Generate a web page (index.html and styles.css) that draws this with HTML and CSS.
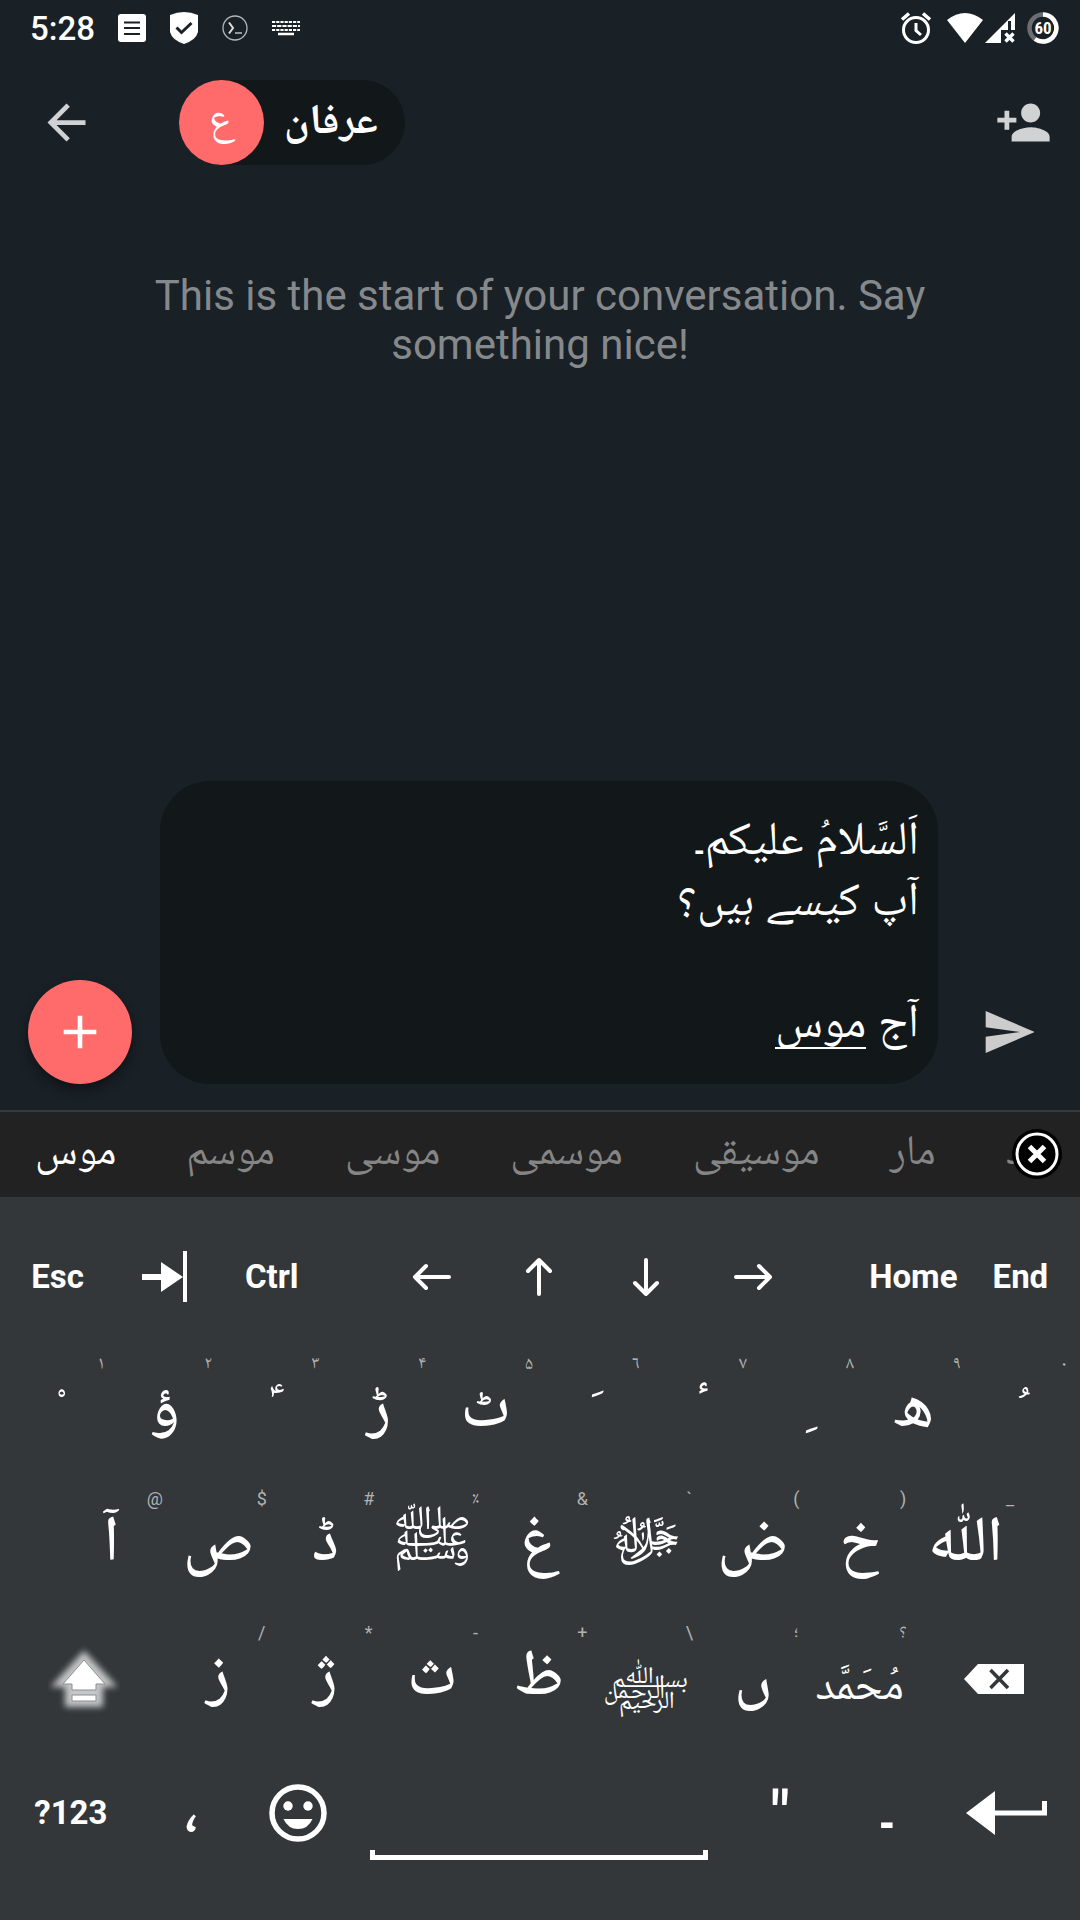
FILE: index.html
```html
<!DOCTYPE html>
<html lang="en">
<head>
<meta charset="utf-8">
<meta name="viewport" content="width=device-width, initial-scale=1">
<title>عرفان</title>
<link rel="stylesheet" href="styles.css">
</head>
<body>
<div class="screen">
  <div class="status">
    <span class="clock">5:28</span>
    <svg class="st-doc" width="28" height="28" viewBox="0 0 28 28"><rect width="28" height="28" rx="3" fill="#fff"/><path d="M6 8.500h16M6 14h16M6 20h16" stroke="#1a2026" stroke-width="2"/></svg>
    <svg class="st-shield" width="28" height="32" viewBox="0 0 28 32"><path d="M0 3Q14-3 28 3V20Q26 28 14 32Q2 28 0 20Z" fill="#fff"/><path d="M6.500 15.500l5 5L21.500 11" fill="none" stroke="#1a2026" stroke-width="3"/></svg>
    <svg class="st-term" width="26" height="26" viewBox="0 0 26 26" fill="none" stroke="#b4b7ba"><circle cx="13" cy="13" r="12" stroke-width="1.300"/><path d="M7 7.500l4 5.500-4 5.500" stroke="#ddd" stroke-width="2"/><path d="M13 18h7" stroke-width="1.600"/></svg>
    <svg class="st-kbd" width="28" height="16" viewBox="0 0 28 16" fill="none" stroke="#fff"><path d="M0 2h28M0 10h28" stroke-width="2.200" stroke-dasharray="3.200 1"/><path d="M0 6h28" stroke-width="2.200" stroke-dasharray="4.200 1"/><path d="M6 14h16" stroke-width="2.500"/></svg>
    <span class="grow"></span>
    <svg class="st-alarm" width="32" height="32" viewBox="0 0 32 32" fill="none" stroke="#fff"><circle cx="16" cy="18" r="12.500" stroke-width="3"/><path d="M16 11v7.500l5 4.500" stroke-width="3"/><path d="M2 7.500l7-6M30 7.500l-7-6" stroke-width="3.600"/></svg>
    <svg class="st-wifi" width="36" height="30" viewBox="0 0 36 30"><path d="M0 7Q18-7 36 7L18 30Z" fill="#fff"/></svg>
    <svg class="st-cell" width="30" height="30" viewBox="0 0 30 30"><path d="M30 0V17h-4V8h-3v9h-7v13H0Z" fill="#fff"/><path d="M20.500 20.500l8 8m0-8l-8 8" stroke="#fff" stroke-width="3.400"/></svg>
    <svg class="st-batt" width="32" height="32" viewBox="0 0 32 32"><circle cx="16" cy="16" r="13.500" fill="none" stroke="#6a6e71" stroke-width="4.500"/><path d="M16 2.500A13.500 13.500 0 1 1 8 27" fill="none" stroke="#fff" stroke-width="4.500"/><text x="16" y="22" text-anchor="middle" class="batt-text">60</text></svg>
  </div>

  <header class="bar">
    <button class="icon-btn back" aria-label="Back"><svg width="57" height="57" viewBox="0 0 24 24" fill="#d0d2d3"><path d="M20 11H7.830l5.590-5.590L12 4l-8 8 8 8 1.410-1.410L7.830 13H20v-2z"/></svg></button>
    <button class="chip"><span class="avatar ar">ع</span><span class="name ar">عرفان</span></button>
    <span class="grow"></span>
    <button class="icon-btn" aria-label="Add person"><svg width="57" height="57" viewBox="0 0 24 24" fill="#d0d2d3"><path d="M15 12c2.210 0 4-1.790 4-4s-1.790-4-4-4-4 1.790-4 4 1.790 4 4 4zm-9-2V7H4v3H1v2h3v3h2v-3h3v-2H6zm9 4c-2.670 0-8 1.340-8 4v2h16v-2c0-2.660-5.330-4-8-4z"/></svg></button>
  </header>

  <main class="thread"><p class="intro">This is the start of your conversation. Say something nice!</p></main>

  <form class="composer">
    <button type="button" class="fab" aria-label="Attach"><svg width="56" height="56" viewBox="0 0 24 24" fill="#fff"><path d="M19 13h-6v6h-2v-6H5v-2h6V5h2v6h6v2z"/></svg></button>
    <div class="field">
      <textarea class="message ar" lang="ur" dir="rtl" rows="4" aria-label="Message">اَلسَّلامُ علیکم۔
آپ کیسے ہیں؟

آج موس</textarea>
      <span class="composing"></span>
    </div>
    <button type="button" class="icon-btn" aria-label="Send"><svg width="56" height="56" viewBox="0 0 24 24" fill="#ccc"><path d="M2.010 21L23 12 2.010 3 2 10l15 2-15 2z"/></svg></button>
  </form>

  <section class="keyboard">
    <div class="suggest ar" lang="ur">
      <button class="word first">موس</button><button class="word">موسم</button><button class="word">موسی</button><button class="word">موسمی</button><button class="word">موسیقی</button><button class="word">مار</button><button class="word">مود</button>
      <button class="close" aria-label="Close suggestions"><svg width="50" height="50" viewBox="0 0 50 50"><circle cx="25" cy="25" r="25" fill="#000"/><circle cx="25" cy="25" r="20" fill="none" stroke="#fff" stroke-width="3"/><path d="M17.500 17.500l15 15m0-15l-15 15" stroke="#fff" stroke-width="5"/></svg></button>
    </div>
    <div class="keys">
      <div class="row fn">
        <button class="key">Esc</button>
        <button class="key" aria-label="Tab"><svg width="46" height="52" viewBox="0 0 46 52" fill="#fff"><path d="M0 23h19V11l22 15-22 15V29H0zM41 0h4v51h-4z"/></svg></button>
        <button class="key">Ctrl</button>
        <span class="gap"></span>
        <button class="key" aria-label="Left"><svg class="arrow" width="40" height="40" viewBox="0 0 40 40"><path d="M37 20H3M14 9L3 20l11 11"/></svg></button>
        <button class="key" aria-label="Up"><svg class="arrow" width="40" height="40" viewBox="0 0 40 40"><path d="M20 37V3M9 14L20 3l11 11"/></svg></button>
        <button class="key" aria-label="Down"><svg class="arrow" width="40" height="40" viewBox="0 0 40 40"><path d="M20 3v34M9 26l11 11 11-11"/></svg></button>
        <button class="key" aria-label="Right"><svg class="arrow" width="40" height="40" viewBox="0 0 40 40"><path d="M3 20h34M26 9l11 11-11 11"/></svg></button>
        <span class="gap"></span>
        <button class="key">Home</button>
        <button class="key">End</button>
      </div>
      <div class="row ar" lang="fa">
        <button class="key letter mark"><small class="hint">۱</small>&nbsp;ْ</button>
        <button class="key letter"><small class="hint">۲</small>ؤ</button>
        <button class="key letter mark"><small class="hint">۳</small>&nbsp;ؑ</button>
        <button class="key letter"><small class="hint">۴</small>ڑ</button>
        <button class="key letter"><small class="hint">۵</small>ٹ</button>
        <button class="key letter mark"><small class="hint" lang="ar">٦</small>&nbsp;َ</button>
        <button class="key letter mark"><small class="hint">٧</small>&nbsp;ٔ</button>
        <button class="key letter mark"><small class="hint">۸</small>&nbsp;ِ</button>
        <button class="key letter"><small class="hint">۹</small>ھ</button>
        <button class="key letter mark"><small class="hint">۰</small>&nbsp;ُ</button>
      </div>
      <div class="row inset ar">
        <button class="key letter"><small class="hint">@</small>آ</button>
        <button class="key letter"><small class="hint">$</small>ص</button>
        <button class="key letter"><small class="hint">#</small>ڈ</button>
        <button class="key letter"><small class="hint">٪</small>ﷺ</button>
        <button class="key letter"><small class="hint">&amp;</small>غ</button>
        <button class="key letter"><small class="hint">`</small>ﷻ</button>
        <button class="key letter"><small class="hint">(</small>ض</button>
        <button class="key letter"><small class="hint">)</small>خ</button>
        <button class="key letter"><small class="hint">_</small>ﷲ</button>
      </div>
      <div class="row ar">
        <button class="key wide" aria-label="Shift"><svg width="72" height="72" viewBox="0 0 72 72"><path class="glow" d="M36 15L58 39H50V59H22V39H14Z"/><path d="M36 17L57 41H48v6H24V41H15ZM24 52h24v6H24z" fill="#fff" stroke="#8b8e90"/></svg></button>
        <button class="key letter"><small class="hint">/</small>ز</button>
        <button class="key letter"><small class="hint">*</small>ژ</button>
        <button class="key letter"><small class="hint">-</small>ث</button>
        <button class="key letter"><small class="hint">+</small>ظ</button>
        <button class="key phrase"><small class="hint">\</small>﷽</button>
        <button class="key letter"><small class="hint">؛</small>ں</button>
        <button class="key phrase"><small class="hint">؟</small>مُحَمَّد</button>
        <button class="key wide" aria-label="Backspace"><svg width="60" height="30" viewBox="0 0 60 30"><path d="M0 15L14 0H60V30H14Z" fill="#fff"/><path d="M26.500 6L44 24M44 6L26.500 24" stroke="#333739" stroke-width="3.500"/></svg></button>
      </div>
      <div class="row ar">
        <button class="key mode">?123</button>
        <button class="key letter">،</button>
        <button class="key" aria-label="Emoji"><svg width="58" height="58" viewBox="0 0 58 58" fill="#fff"><circle cx="29" cy="29" r="26" fill="none" stroke="#fff" stroke-width="5.500"/><circle cx="19" cy="22" r="4.700"/><circle cx="39" cy="22" r="4.700"/><path d="M14.500 35h29Q39 45 29 45T14.500 35z"/></svg></button>
        <button class="key space" aria-label="Space"><span class="spacebar"></span></button>
        <button class="key letter">"</button>
        <button class="key letter">۔</button>
        <button class="key mode" aria-label="Enter"><svg width="82" height="44" viewBox="0 0 82 44" fill="#fff"><path d="M0 22L29 0V19.500H76V10h5V24.500H29V44z"/></svg></button>
      </div>
    </div>
  </section>
</div>
</body>
</html>
```
FILE: styles.css
```css
* { box-sizing: border-box; }
body { margin: 0; background: #192026; color: #fff; font-family: Roboto, "Liberation Sans", sans-serif; }
button { border: 0; padding: 0; margin: 0; background: none; color: inherit; font: inherit; cursor: pointer; }
svg { display: block; flex: none; }
.ar { font-family: Roboto, "Noto Naskh Arabic UI", "Noto Naskh Arabic", "Noto Sans Arabic", "DejaVu Sans", sans-serif; }
.grow { flex: 1; }
.screen { min-height: 100vh; display: flex; flex-direction: column; }

.status { display: flex; align-items: center; height: 56px; padding: 0 21px 0 30px; }
.clock { font-size: 33px; font-weight: 500; line-height: 40px; padding-top: 2px; }
.st-doc { margin-left: 23px; }
.st-shield, .st-term, .st-kbd { margin-left: 24px; }
.st-wifi { margin-left: 15px; }
.st-cell { margin-left: 2px; }
.st-batt { margin-left: 12px; }
.batt-text { font-family: "Roboto Condensed", Roboto, sans-serif; font-size: 17px; font-weight: 700; fill: #fff; }

.bar { display: flex; align-items: center; height: 133px; padding: 0 28px 0 38px; }
.chip { display: flex; align-items: center; height: 85px; margin-left: 84px; padding-right: 27px; border-radius: 43px; background: #12171a; }
.avatar { width: 85px; height: 85px; border-radius: 50%; background: #ff6b6b; font-size: 42px; line-height: 88px; text-align: center; }
.name { margin-left: 20px; padding-top: 5px; font-size: 42px; font-weight: 700; line-height: 80px; }

.thread { flex: 1; padding: 82px 120px 0; }
.intro { margin: 0 auto; max-width: 800px; text-align: center; font-size: 42px; line-height: 49px; color: #86898c; }

.composer { display: flex; align-items: flex-end; padding: 0 43px 26px 28px; }
.fab { display: flex; align-items: center; justify-content: center; width: 104px; height: 104px; border-radius: 50%; background: #ff6b6b; box-shadow: 0 6px 12px rgba(0, 0, 0, .4); }
.field { position: relative; flex: 1; margin: 0 43px 0 28px; }
.composer .icon-btn { padding-bottom: 24px; }
.message { display: block; width: 100%; height: 303px; padding: 32px 19px 24px; border: 0; border-radius: 50px; outline: 0; resize: none; overflow: hidden; background: #12171a; color: #fff; font-size: 47px; line-height: 61px; }
.composing { position: absolute; right: 72px; bottom: 35px; width: 91px; height: 2px; background: #fff; }

.keyboard { background: #333739; border-top: 2px solid #333b3f; }
.suggest { position: relative; display: flex; height: 85px; background: #222; font-size: 42px; color: #858585; overflow: hidden; }
.word { padding: 0 35px; line-height: 87px; white-space: nowrap; }
.first { color: #fff; }
.close { position: absolute; right: 18px; top: 17px; }

.keys { padding: 13px 6px 40px 4px; }
.row { display: flex; height: 134px; font-size: 64px; }
.key { position: relative; flex: 107 1 0; min-width: 0; display: flex; align-items: center; justify-content: center; line-height: 120px; white-space: nowrap; }
.letter { padding-top: 6px; font-weight: 500; }
.mark { text-indent: 14px; }
.gap { flex: 53 1 0; }
.inset { padding: 0 54px; }
.wide { flex-grow: 161; }
.mode { flex-grow: 134; }
.space { flex-grow: 376; }
.fn, .row .mode { font-family: Roboto, sans-serif; font-size: 33px; font-weight: 700; }
.arrow { fill: none; stroke: #fff; stroke-width: 4; stroke-linecap: round; stroke-linejoin: round; }
.row .phrase { padding-top: 22px; line-height: 110px; font-size: 44px; }
.hint { position: absolute; top: 11px; right: 0; width: 20px; text-align: center; text-indent: 0; font-size: 18px; font-weight: 400; line-height: 20px; color: #b0b2b3; }
.glow { fill: #c4c6c7; stroke: #c4c6c7; stroke-width: 10; filter: blur(3px); }
.spacebar { width: 338px; height: 10px; margin-top: 84px; border: 5px solid #fff; border-top: 0; }
```
